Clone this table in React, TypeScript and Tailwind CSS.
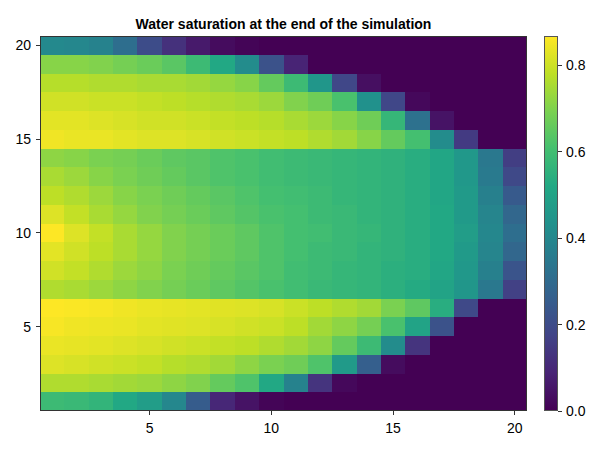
import React from "react";

const V: number[][] = [
  [0.47, 0.46, 0.44, 0.36, 0.23, 0.14, 0.07, 0.03, 0.01, 0, 0, 0, 0, 0, 0, 0, 0, 0, 0, 0],
  [0.82, 0.82, 0.81, 0.79, 0.77, 0.74, 0.68, 0.6, 0.48, 0.25, 0.1, 0, 0, 0, 0, 0, 0, 0, 0, 0],
  [0.89, 0.89, 0.88, 0.88, 0.87, 0.87, 0.86, 0.84, 0.82, 0.76, 0.68, 0.52, 0.21, 0.04, 0, 0, 0, 0, 0, 0],
  [0.93, 0.93, 0.92, 0.92, 0.91, 0.9, 0.89, 0.88, 0.87, 0.85, 0.81, 0.78, 0.71, 0.5, 0.21, 0.02, 0, 0, 0, 0],
  [0.96, 0.96, 0.95, 0.94, 0.93, 0.93, 0.92, 0.91, 0.9, 0.89, 0.87, 0.85, 0.82, 0.78, 0.66, 0.37, 0.05, 0, 0, 0],
  [0.98, 0.97, 0.97, 0.96, 0.95, 0.95, 0.94, 0.93, 0.92, 0.91, 0.9, 0.88, 0.86, 0.82, 0.76, 0.7, 0.48, 0.17, 0, 0],
  [0.83, 0.82, 0.8, 0.79, 0.77, 0.75, 0.74, 0.72, 0.71, 0.69, 0.68, 0.67, 0.66, 0.65, 0.64, 0.62, 0.59, 0.53, 0.4, 0.18],
  [0.87, 0.85, 0.82, 0.8, 0.78, 0.76, 0.74, 0.72, 0.71, 0.69, 0.68, 0.67, 0.66, 0.65, 0.64, 0.62, 0.59, 0.53, 0.41, 0.22],
  [0.9, 0.88, 0.85, 0.82, 0.8, 0.78, 0.76, 0.74, 0.72, 0.7, 0.69, 0.68, 0.66, 0.65, 0.64, 0.62, 0.59, 0.54, 0.43, 0.28],
  [0.95, 0.91, 0.87, 0.84, 0.81, 0.79, 0.77, 0.75, 0.73, 0.71, 0.7, 0.68, 0.67, 0.65, 0.64, 0.62, 0.6, 0.54, 0.45, 0.33],
  [1.0, 0.95, 0.91, 0.87, 0.84, 0.81, 0.79, 0.77, 0.75, 0.72, 0.7, 0.69, 0.67, 0.66, 0.64, 0.62, 0.6, 0.55, 0.46, 0.36],
  [0.96, 0.93, 0.9, 0.87, 0.84, 0.81, 0.79, 0.77, 0.75, 0.72, 0.7, 0.68, 0.67, 0.65, 0.64, 0.62, 0.6, 0.54, 0.45, 0.33],
  [0.93, 0.91, 0.88, 0.85, 0.83, 0.8, 0.78, 0.76, 0.74, 0.72, 0.69, 0.68, 0.66, 0.65, 0.63, 0.62, 0.59, 0.53, 0.43, 0.26],
  [0.88, 0.87, 0.85, 0.83, 0.81, 0.79, 0.77, 0.75, 0.73, 0.71, 0.69, 0.67, 0.66, 0.65, 0.63, 0.61, 0.58, 0.52, 0.4, 0.19],
  [1.0, 0.995, 0.99, 0.98, 0.97, 0.965, 0.96, 0.955, 0.95, 0.94, 0.92, 0.9, 0.88, 0.86, 0.8, 0.75, 0.62, 0.22, 0, 0],
  [0.99, 0.98, 0.975, 0.97, 0.96, 0.955, 0.95, 0.94, 0.93, 0.92, 0.9, 0.86, 0.83, 0.79, 0.71, 0.58, 0.25, 0, 0, 0],
  [0.97, 0.965, 0.96, 0.95, 0.94, 0.93, 0.92, 0.91, 0.9, 0.88, 0.86, 0.83, 0.76, 0.68, 0.48, 0.15, 0, 0, 0, 0],
  [0.95, 0.94, 0.93, 0.92, 0.91, 0.89, 0.88, 0.86, 0.83, 0.8, 0.78, 0.72, 0.54, 0.3, 0.03, 0, 0, 0, 0, 0],
  [0.88, 0.88, 0.87, 0.86, 0.85, 0.83, 0.81, 0.76, 0.72, 0.6, 0.44, 0.15, 0.02, 0, 0, 0, 0, 0, 0, 0],
  [0.68, 0.67, 0.65, 0.6, 0.55, 0.46, 0.29, 0.11, 0.05, 0.01, 0, 0, 0, 0, 0, 0, 0, 0, 0, 0],
];

const STOPS: [number, number, number][] = [
  [68, 1, 84],
  [72, 36, 117],
  [65, 68, 135],
  [53, 95, 141],
  [42, 120, 142],
  [33, 145, 140],
  [34, 168, 132],
  [68, 191, 112],
  [122, 209, 81],
  [189, 223, 38],
  [253, 231, 37],
];

function viridis(t: number): string {
  const x = Math.max(0, Math.min(1, t)) * 10;
  const i = Math.min(9, Math.floor(x));
  const f = x - i;
  const a = STOPS[i];
  const b = STOPS[i + 1];
  const c = a.map((v, k) => Math.round(v + (b[k] - v) * f));
  return `rgb(${c[0]},${c[1]},${c[2]})`;
}

const TICKS = new Set([5, 10, 15, 20]);
const rows = Array.from({ length: 20 }, (_, i) => 20 - i);
const cols = Array.from({ length: 20 }, (_, i) => i + 1);

export default function App() {
  return (
    <div className="w-[600px] h-[450px] bg-white text-black font-['Liberation_Sans',Arial,sans-serif] text-[14px] leading-[16px] overflow-hidden">
      <div className="pt-[16px] pl-[40px] w-[527px] text-center font-bold">
        Water saturation at the end of the simulation
      </div>
      <div className="mt-[4px] flex items-start">
        {/* y axis */}
        <div className="w-[40px] h-[375px] shrink-0 grid grid-rows-[repeat(20,minmax(0,1fr))]">
          {rows.map((k) => (
            <div key={k} className="flex items-center justify-end gap-[5px] overflow-visible">
              {TICKS.has(k) && (
                <>
                  <span>{k}</span>
                  <span className="w-[4px] h-px bg-[#333]" />
                </>
              )}
            </div>
          ))}
        </div>

        {/* heatmap */}
        <div className="flex flex-col">
          <div className="w-[487px] h-[375px] relative">
            <div className="grid grid-cols-[repeat(20,minmax(0,1fr))] grid-rows-[repeat(20,minmax(0,1fr))] w-full h-full">
              {V.map((row, r) =>
                row.map((t, c) => <div key={`${r}-${c}`} style={{ backgroundColor: viridis(t) }} />)
              )}
            </div>
            <div className="absolute inset-0 border border-[#333]" />
          </div>
          {/* x axis */}
          <div className="w-[487px] grid grid-cols-[repeat(20,minmax(0,1fr))]">
            {cols.map((k) => (
              <div key={k} className="flex flex-col items-center">
                {TICKS.has(k) && (
                  <>
                    <span className="w-px h-[4px] bg-[#333]" />
                    <span className="mt-[5px]">{k}</span>
                  </>
                )}
              </div>
            ))}
          </div>
        </div>

        {/* colorbar */}
        <div className="ml-[17px] flex h-[375px]">
          <div className="w-[14px] h-full border border-[#555] bg-[linear-gradient(to_top,#440154,#482475,#414487,#355f8d,#2a788e,#21918c,#22a884,#44bf70,#7ad151,#bddf26,#fde725)]" />
          <div className="flex flex-col justify-end">
            <div className="h-[362px] mb-[-8px] flex flex-col-reverse justify-between">
              {["0.0", "0.2", "0.4", "0.6", "0.8"].map((v) => (
                <div key={v} className="h-[16px] flex items-center gap-[4px]">
                  <span className="w-[4px] h-px bg-[#333]" />
                  <span>{v}</span>
                </div>
              ))}
            </div>
          </div>
        </div>
      </div>
    </div>
  );
}
